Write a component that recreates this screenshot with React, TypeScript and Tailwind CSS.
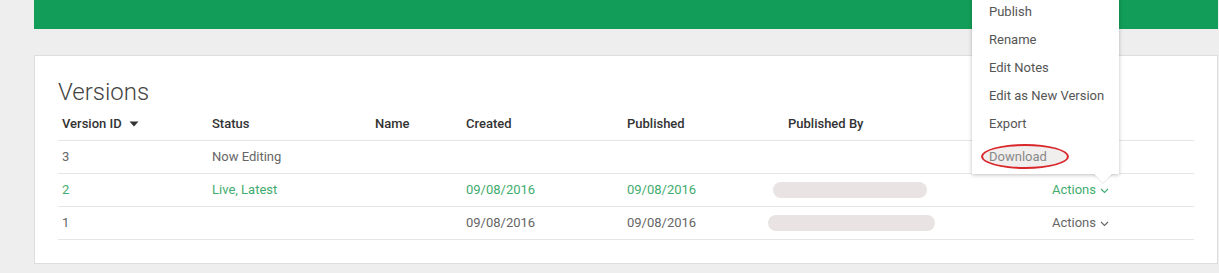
import React from "react";

const font = { fontFamily: "Roboto, 'Noto Sans', Arial, sans-serif" };

function Chevron({ className = "" }: { className?: string }) {
  return (
    <svg width="9" height="6" viewBox="0 0 9 6" className={className} fill="none">
      <polyline points="1,1 4.5,4.5 8,1" stroke="currentColor" strokeWidth="1.1" />
    </svg>
  );
}

function Caret() {
  return (
    <svg width="10" height="6" viewBox="0 0 10 6" className="ml-[7px] inline-block">
      <polygon points="0.5,0.5 9.5,0.5 5,5.5" fill="#333" />
    </svg>
  );
}

const cols = "grid grid-cols-[150px_163px_91px_161px_161px_264px_1fr]";

type Row = {
  id: string;
  status: string;
  created: string;
  published: string;
  blob?: { ml: number; w: number };
  actions: boolean;
  green?: boolean;
};

const rows: Row[] = [
  { id: "3", status: "Now Editing", created: "", published: "", actions: false },
  { id: "2", status: "Live, Latest", created: "09/08/2016", published: "09/08/2016", blob: { ml: -15, w: 154 }, actions: true, green: true },
  { id: "1", status: "", created: "09/08/2016", published: "09/08/2016", blob: { ml: -20, w: 167 }, actions: true },
];

export default function App() {
  return (
    <div style={font} className="relative h-[273px] w-full overflow-hidden bg-[#eeeeee] pl-[34px] pr-[1px]">
      <div className="h-[29px] bg-[#129e58]" />
      <div className="mt-[26px] h-[209px] border border-[#dddddd] bg-white px-[23px] pt-[22px]">
        <div className="h-[29px] text-[24px] font-light leading-[29px] text-[#444]">Versions</div>
        <div className={`${cols} h-[34px] items-center border-b border-[#e6e6e6] text-[13px] font-medium text-[#333]`}>
          <div className="flex items-center pl-[4px]">
            Version ID
            <Caret />
          </div>
          <div className="pl-[4px]">Status</div>
          <div className="pl-[4px]">Name</div>
          <div className="pl-[4px]">Created</div>
          <div className="pl-[4px]">Published</div>
          <div className="pl-[4px]">Published By</div>
          <div />
        </div>
        {rows.map((r) => (
          <div
            key={r.id}
            className={`${cols} h-[33px] items-center border-b border-[#e6e6e6] text-[13px] ${
              r.green ? "text-[#3fac6e]" : "text-[#666]"
            }`}
          >
            <div className="pl-[4px]">{r.id}</div>
            <div className="pl-[4px]">{r.status}</div>
            <div className="pl-[4px]" />
            <div className="pl-[4px]">{r.created}</div>
            <div className="pl-[4px]">{r.published}</div>
            <div className="pl-[4px]">
              {r.blob && (
                <div
                  className="h-[16px] rounded-full bg-[#e9e3e3]"
                  style={{ marginLeft: r.blob.ml, width: r.blob.w }}
                />
              )}
            </div>
            <div className="flex items-center pl-[4px]">
              {r.actions && (
                <>
                  <span>Actions</span>
                  <Chevron className="ml-[4px] mt-[1px]" />
                </>
              )}
            </div>
          </div>
        ))}
      </div>

      {/* dropdown menu */}
      <div className="absolute left-[972px] top-[-2px] w-[147px] bg-white pb-[3px] shadow-[0_1px_4px_rgba(0,0,0,0.25)]">
        {["Publish", "Rename", "Edit Notes", "Edit as New Version", "Export"].map((t) => (
          <div key={t} className="h-[28px] pl-[17px] text-[13px] leading-[28px] text-[#555]">
            {t}
          </div>
        ))}
        <div className="relative mt-[5px] h-[28px] pl-[17px] text-[13px] leading-[28px] text-[#888]">
          <div className="absolute left-[9px] top-[1px] h-[25px] w-[88px] rounded-[50%] border-2 border-[#d9262a] bg-[#f1efee]" />
          <span className="relative">Download</span>
        </div>
        <div className="absolute bottom-[-10px] left-[121px] h-0 w-0 border-x-[10px] border-t-[10px] border-x-transparent border-t-[rgba(0,0,0,0.1)]" />
        <div className="absolute bottom-[-9px] left-[122px] h-0 w-0 border-x-[9px] border-t-[9px] border-x-transparent border-t-white" />
      </div>
    </div>
  );
}
